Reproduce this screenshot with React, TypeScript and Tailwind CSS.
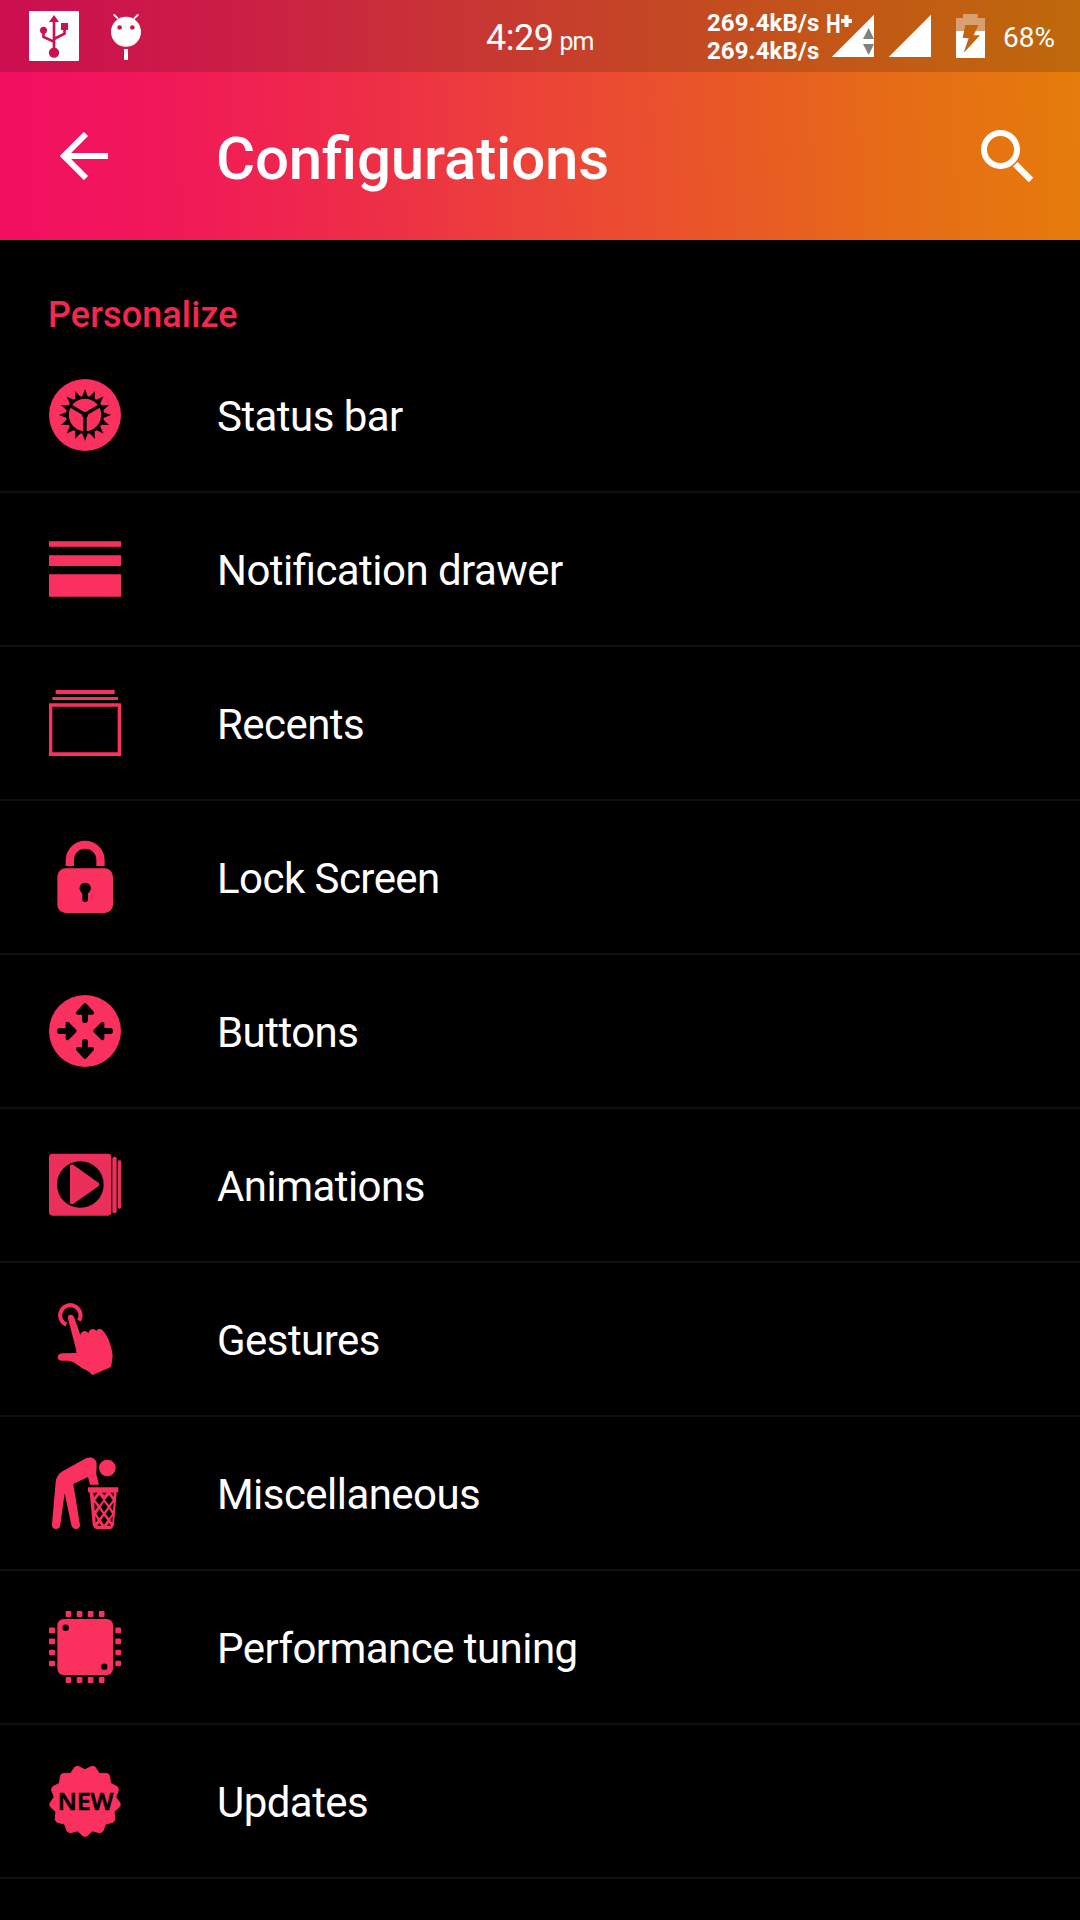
import type { ReactNode } from "react";

const PINK = "#fa305e";

function Glyph({ box, children }: { box: string; children: ReactNode }) {
  return (
    <svg className="size-[72px] shrink-0 overflow-visible" viewBox={box} fill={PINK}>
      {children}
    </svg>
  );
}

function polar(cx: number, cy: number, r: number, deg: number) {
  const a = (deg * Math.PI) / 180;
  return `${(cx + r * Math.sin(a)).toFixed(2)},${(cy - r * Math.cos(a)).toFixed(2)}`;
}

function gearPoints() {
  const pts: string[] = [];
  for (let i = 0; i < 16; i++) {
    const a = i * 22.5;
    pts.push(polar(165, 165, 57, a - 8), polar(165, 165, 78, a), polar(165, 165, 57, a + 8));
  }
  return pts.join(" ");
}

function sealPoints() {
  const pts: string[] = [];
  for (let i = 0; i < 13; i++) {
    const a = 180 + (i * 360) / 13;
    pts.push(polar(165, 152.5, 106, a - 2.5), polar(165, 152.5, 106, a + 2.5), polar(165, 152.5, 93, a + 180 / 13));
  }
  return pts.join(" ");
}

const StatusBarIcon = (
  <Glyph box="57 57 216 216">
    <circle cx="165" cy="165" r="108" />
    <polygon points={gearPoints()} fill="#000" />
    <circle cx="165" cy="165" r="48.5" />
    <path d="M165 163V216M165 163L122 138M165 163L208 138" stroke="#000" strokeWidth="10" />
    <circle cx="165" cy="164" r="9" fill="#000" />
  </Glyph>
);

const DrawerIcon = (
  <Glyph box="57 39 216 216">
    <path d="M57 64h216v16H57zM57 106h216v32H57zM57 163h216v67H57z" />
  </Glyph>
);

const RecentsIcon = (
  <Glyph box="57 501 216 216">
    <path d="M77 510h177v12H77zM67 531h197v9H67z" />
    <path fillRule="evenodd" d="M57 550h216v158H57zM67 560v137h196V560z" />
  </Glyph>
);

const LockIcon = (
  <Glyph box="57 33 216 216">
    <path d="M107 108V91a58.500 58.500 0 0 1 117 0v17h-25V90a33.500 33.500 0 0 0-67 0v18z" />
    <rect x="82" y="115" width="167" height="134" rx="25" />
    <circle cx="165.500" cy="175" r="17" fill="#000" />
    <rect x="157" y="180" width="17" height="36" rx="8" fill="#000" />
  </Glyph>
);

const upArrow =
  "M160 522Q165 516 170 522L191 545Q195 554 186 554H174V570Q174 579 165 579Q156 579 156 570V554H144Q135 554 139 545Z";
const sideArrow =
  "M137 598Q143 603 137 608L116 629Q107 634 107 625V612H90Q81 612 81 603Q81 594 90 594H107V581Q107 572 116 577Z";

const ButtonsIcon = (
  <Glyph box="57 495 216 216">
    <circle cx="165" cy="603" r="108" />
    <g fill="#000">
      <path d={upArrow} />
      <path d={upArrow} transform="rotate(180 165 603)" />
      <path d={sideArrow} />
      <path d={sideArrow} transform="rotate(180 165 603)" />
    </g>
  </Glyph>
);

const AnimationsIcon = (
  <Glyph box="57 57 216 216">
    <g fill="#ea2f5b">
      <rect x="57" y="71" width="187" height="186" rx="10" />
      <rect x="247" y="80" width="13" height="170" rx="6" />
      <rect x="264" y="91" width="9.500" height="145" rx="4" />
      <circle cx="151" cy="163.500" r="70" fill="#000" />
      <path d="M126 109V217L202 163.500Z" stroke="#ea2f5b" strokeWidth="12" strokeLinejoin="round" />
    </g>
  </Glyph>
);

const GesturesIcon = (
  <Glyph box="57 54 216 216">
    <path d="M109 119A30.500 30.500 0 1 1 147 107" fill="none" stroke={PINK} strokeWidth="12" />
    <path d="M114 101C112 93 116 89 122 89C128 89 131 92 133 98L151 150C154 141 159 138 164 138C170 138 173 141 175 145C177 136 182 132 189 132C194 132 197 135 199 138C205 130 214 131 219 138C232 150 244 179 248 210Q247 230 243 246L188 270C183 267 179 262 173 258C156 251 144 240 129 231C118 226 107 227 95 227C86 226 83 222 83 217C83 209 89 206 97 205L139 204C139 193 136 184 133 173Z" />
  </Glyph>
);

const MiscIcon = (
  <Glyph box="57 51 216 216">
    <circle cx="232" cy="84" r="25" />
    <path d="M66 253L77 126C78 112 84 103 95 95L165 56C182 47 200 55 200 72L199 103L207 134H180L174 111L130 132L149 249C152 260 147 267 138 267C130 267 126 262 124 255L104 160L91 254C90 262 86 267 78 267C70 267 65 262 66 253Z" />
    <path d="M174 142H265V157H260L252 253Q250 267 239 267H202Q190 267 188 253L179 157H174Z" />
    <g fill="#000">
      <path d="M190 158H203L192 171ZM216 158H230L223 166ZM242 158H252L251 171Z" />
      <path d="M208 165L220 180L208 195L196 180ZM237 165L248 180L237 195L225 180Z" />
      <path d="M193 187L203 201L194 212ZM222 186L233 201L222 216L212 201ZM251 187L249 212L241 201Z" />
      <path d="M208 207L218 221L208 235L199 221ZM237 207L246 221L237 235L227 221Z" />
      <path d="M196 228L203 240L197 248ZM222 227L232 241L222 255L213 241ZM248 228L247 248L241 240Z" />
      <path d="M208 248L214 258H202ZM237 248L243 258H231Z" />
    </g>
  </Glyph>
);

const pins = [0, 33.2, 66.4, 99.6];

const ChipIcon = (
  <Glyph box="57 63 216 216">
    <rect x="82" y="87" width="167" height="168" rx="19" />
    <circle cx="107" cy="113" r="9.500" fill="#000" />
    <circle cx="223" cy="230" r="9.500" fill="#000" />
    {pins.map((p) => (
      <g key={p}>
        <rect x={107 + p} y="63" width="17" height="18" rx="3" />
        <rect x={107 + p} y="261" width="17" height="18" rx="3" />
        <rect x="57" y={112.5 + p} width="18" height="17" rx="3" />
        <rect x="256" y={112.5 + p} width="17" height="17" rx="3" />
      </g>
    ))}
  </Glyph>
);

const UpdatesIcon = (
  <Glyph box="57 45 216 216">
    <polygon points={sealPoints()} stroke={PINK} strokeWidth="3" strokeLinejoin="round" />
    <text
      x="167"
      y="179"
      fill="#000"
      stroke="#000"
      strokeWidth="2"
      fontFamily="Open Sans"
      fontWeight="600"
      fontSize="72"
      textAnchor="middle"
      textLength="167"
      lengthAdjust="spacingAndGlyphs"
    >
      NEW
    </text>
  </Glyph>
);

const items: { label: string; icon: ReactNode }[] = [
  { label: "Status bar", icon: StatusBarIcon },
  { label: "Notification drawer", icon: DrawerIcon },
  { label: "Recents", icon: RecentsIcon },
  { label: "Lock Screen", icon: LockIcon },
  { label: "Buttons", icon: ButtonsIcon },
  { label: "Animations", icon: AnimationsIcon },
  { label: "Gestures", icon: GesturesIcon },
  { label: "Miscellaneous", icon: MiscIcon },
  { label: "Performance tuning", icon: ChipIcon },
  { label: "Updates", icon: UpdatesIcon },
];

function StatusStrip() {
  return (
    <div className="grid h-[72px] grid-cols-[486px_221px_1fr] bg-[linear-gradient(90deg,#cc0e50_0%,#cb1c47_20%,#c93137_39%,#c54427_58%,#c25717_78%,#be690b_100%)]">
      <div className="flex items-start gap-8 pt-[11px] pl-[29px]">
        <svg className="size-[50px]" viewBox="87 33 150 150">
          <rect x="87" y="33" width="150" height="150" rx="4" fill="#fff" />
          <g fill="#cc124e">
            <path d="M162 45L177 66H147Z" />
            <rect x="183" y="69" width="21" height="21" />
            <circle cx="130.500" cy="90.500" r="10.500" />
            <circle cx="162" cy="158" r="15.500" />
          </g>
          <path d="M162 60V150M130.500 90V111L162 125M193.500 85V101L162 117" fill="none" stroke="#cc124e" strokeWidth="8" />
        </svg>
        <svg className="mt-[2px] h-[48px] w-[30px]" viewBox="333 39 90 144">
          <path d="M341 43L354 56M415 43L402 56" stroke="#fff" strokeWidth="6" />
          <circle cx="378" cy="95.500" r="45" fill="#fff" />
          <circle cx="359" cy="82.500" r="7" fill="#cb174a" />
          <circle cx="397" cy="82.500" r="7" fill="#cb174a" />
          <rect x="372" y="147" width="12" height="33" fill="#fff" />
        </svg>
      </div>
      <div className="flex items-baseline pt-[15px] leading-[46px]">
        <span className="text-[36px] tracking-[-0.5px]">4:29</span>
        <span className="ml-[6px] text-[25px] tracking-[-1px]">pm</span>
      </div>
      <div className="flex items-start">
        <div className="w-[119px] pt-[9px] text-[24px] leading-[28px] font-bold tracking-[0.1px] whitespace-nowrap">
          <div>269.4kB/s</div>
          <div>269.4kB/s</div>
        </div>
        <div className="relative w-[48px] pt-[14px]">
          <svg className="ml-[6px] h-[43px] w-[42px]" viewBox="426 42 126 129">
            <path d="M552 44V171H425Z" fill="#fff" />
            <path d="M536 84L552 117H519ZM519 132H552L536 165Z" fill="#808080" />
          </svg>
          <span className="absolute top-[12px] left-[-0.5px] origin-left scale-x-[0.83] text-[25px] leading-[25px] font-bold">H</span>
          <svg className="absolute top-[15px] left-[15px] size-[12px]" viewBox="0 0 12 12">
            <path d="M5.500 0V12M0 6H11" stroke="#fff" strokeWidth="4" />
          </svg>
        </div>
        <svg className="mt-[14px] ml-[15px] h-[43px] w-[42px]" viewBox="596 42 126 129">
          <path d="M722 44V171H595Z" fill="#fff" />
        </svg>
        <svg className="mt-[14px] ml-[25px] h-[44px] w-[29px]" viewBox="798 42 87 132">
          <path d="M819 42H863V54H885V93H798V54H819Z" fill="#fff" fillOpacity="0.4" />
          <rect x="798" y="93" width="87" height="81" fill="#fff" />
          <path d="M826 75H865L851 106H870L821 159L836 114H818Z" fill="#c3620f" />
        </svg>
        <span className="mt-[17px] ml-[18px] text-[28px] leading-[41px]">68%</span>
      </div>
    </div>
  );
}

export default function App() {
  return (
    <main className="flex h-[1920px] w-[1080px] flex-col overflow-hidden bg-black font-['Roboto',sans-serif] text-white">
      <StatusStrip />
      <header className="flex h-[168px] items-center bg-[linear-gradient(88deg,#f20f61_0%,#f1175a_14%,#ee2c48_33%,#ec413a_48%,#e95529_65%,#e66b17_82%,#e57c0b_100%)]">
        <svg className="ml-[60px] size-[48px]" viewBox="180 396 144 144" fill="none" stroke="#fff" strokeWidth="18">
          <path d="M324 468H198M258 402L192 468L258 534" />
        </svg>
        <h1 className="ml-[108px] flex-1 pt-[6px] text-[60px] leading-[70px] font-medium tracking-[-0.17px] [font-feature-settings:'liga'_1]">Configurations</h1>
        <svg className="mr-[46px] size-[53px]" viewBox="873 387 159 159" fill="none" stroke="#fff">
          <circle cx="931.500" cy="445.500" r="49.500" strokeWidth="18" />
          <path d="M976 490L1023 537" strokeWidth="19" />
        </svg>
      </header>
      <h2 className="h-[99px] pt-[54px] pl-[48px] text-[36px] leading-[42px] font-medium tracking-[0.1px] text-[#f5274f]">Personalize</h2>
      <ul>
        {items.map(({ label, icon }) => (
          <li key={label} className="flex h-[154px] items-center border-b-2 border-[#0f0f0f] pl-[49px]">
            {icon}
            <span className="ml-[96px] pt-[4px] text-[42px] leading-[50px] tracking-[-0.55px] [font-feature-settings:'liga'_1]">{label}</span>
          </li>
        ))}
      </ul>
    </main>
  );
}
